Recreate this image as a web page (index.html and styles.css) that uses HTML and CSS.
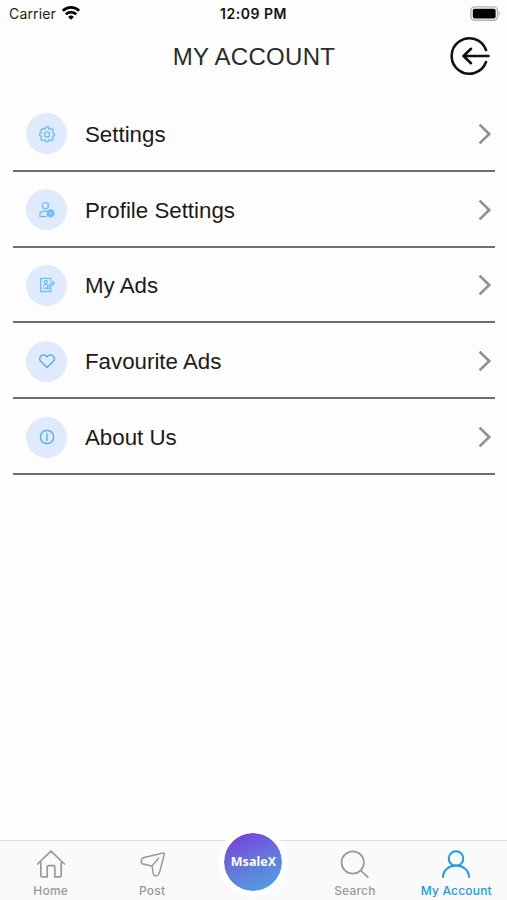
FILE: index.html
```html
<!DOCTYPE html>
<html lang="en">
<head>
<meta charset="utf-8">
<title>My Account</title>
<link rel="stylesheet" href="styles.css">
</head>
<body>
<div class="status">
  <div class="carrier"><span>Carrier</span>
    <svg class="wifi" width="18" height="14" viewBox="0 0 18 14" fill="none" stroke="#000" stroke-width="2.7"><path d="M.9 4.800a11.500 11.500 0 0 1 16.200 0"/><path d="M3.800 8.200a7.400 7.400 0 0 1 10.400 0"/><path d="M9 13.800 6.100 10.900a4.200 4.200 0 0 1 5.800 0z" fill="#000" stroke="none"/></svg>
  </div>
  <div class="time">12:09 PM</div>
  <svg class="battery" width="31" height="16" viewBox="0 0 31 16"><rect x=".9" y=".9" width="26.6" height="13.4" rx="3.8" fill="#fdfdfd" stroke="#b4b4b4" stroke-width="1.4"/><rect x="2.8" y="2.7" width="22.8" height="9.8" rx="1.8"/><path d="M28.600 5.200q2.400 2.400 0 4.800z" fill="#aaa"/></svg>
</div>
<header class="header">
  <h1>MY ACCOUNT</h1>
  <svg class="logout" width="42" height="40" viewBox="0 0 42 40" fill="none" stroke="#111" stroke-width="2.6" stroke-linecap="round" stroke-linejoin="round"><path d="M37 14A17.700 17.700 0 1 0 37 26"/><path d="M39.500 20H14.500M22 12.800 14.500 20l7.500 7.200"/></svg>
</header>
<main class="list">
  <div class="row"><span class="badge"><svg width="18" height="18" viewBox="0 0 18 18"><path d="M7.700 2h2.600l.4 1.900 1.300.5 1.600-1 1.800 1.800-1 1.600.5 1.300 1.500.4v2.100l-1.500.4-.5 1.400 1 1.500-1.800 1.800-1.600-1-1.300.5-.4 1.500H7.700l-.4-1.500-1.300-.5-1.600 1-1.800-1.800 1-1.500-.5-1.400-1.500-.4V8.500l1.500-.4.5-1.300-1-1.600 1.800-1.800 1.600 1 1.300-.5z"/><circle cx="9" cy="9.400" r="2.600"/></svg></span><span class="label">Settings</span><svg class="chevron" width="14" height="22" viewBox="0 0 14 22"><path d="m1.600 1.600 9.600 9.400-9.600 9.400"/></svg></div>
  <div class="row"><span class="badge"><svg width="18" height="18" viewBox="0 0 18 18"><circle cx="7.300" cy="4.800" r="3.100"/><path d="M8.300 15.700H1.900v-2.400q0-3 3-3h3.600"/><path d="m12.500 8.500 3.200 1.900v3.700l-3.200 1.900-3.200-1.900v-3.700z" fill="#6fbcf6"/><circle cx="12.500" cy="12.200" r="1" stroke="#8fcaf9"/></svg></span><span class="label">Profile Settings</span><svg class="chevron" width="14" height="22" viewBox="0 0 14 22"><path d="m1.600 1.600 9.600 9.400-9.600 9.400"/></svg></div>
  <div class="row"><span class="badge"><svg width="18" height="18" viewBox="0 0 18 18"><path d="M12.800 5V2.300H2.700v13.200h10.100v-3"/><circle cx="7.800" cy="5.800" r="1.500"/><path d="M5.500 9.800q2.300-3 4.600 0M5.300 12.200h3M9 13l.6-2.300 5.400-5.300 1.300 1.300-5.200 5.500z"/></svg></span><span class="label">My Ads</span><svg class="chevron" width="14" height="22" viewBox="0 0 14 22"><path d="m1.600 1.600 9.600 9.400-9.600 9.400"/></svg></div>
  <div class="row"><span class="badge strong"><svg width="18" height="18" viewBox="0 0 18 18"><path d="M9 15.500 2.700 9.300C-.6 5.800 4.400.1 9 4.700c4.600-4.600 9.600 1.100 6.300 4.600z"/></svg></span><span class="label">Favourite Ads</span><svg class="chevron" width="14" height="22" viewBox="0 0 14 22"><path d="m1.600 1.600 9.600 9.400-9.600 9.400"/></svg></div>
  <div class="row"><span class="badge strong"><svg width="18" height="18" viewBox="0 0 18 18"><circle cx="9" cy="9" r="6.700"/><path d="M9 7.200v5.200M9 5.400v.5"/></svg></span><span class="label">About Us</span><svg class="chevron" width="14" height="22" viewBox="0 0 14 22"><path d="m1.600 1.600 9.600 9.400-9.600 9.400"/></svg></div>
</main>
<nav class="tabs">
  <div class="tab"><svg width="32" height="32" viewBox="0 0 32 32"><path d="M5.800 13.500v13q0 1.400 1.400 1.400h5v-10q0-1.200 1.200-1.200h5.200q1.200 0 1.200 1.200v10h5q1.400 0 1.400-1.400v-13M2.600 15 16 2.200 29.400 15"/></svg><span>Home</span></div>
  <div class="tab post"><svg width="32" height="32" viewBox="0 0 32 32"><path d="M27.200 4 8 8.500Q5.400 9.300 5.300 12v1.200q.1 1.500 1.500 1.900l9.200 1.800 1.400 8.200q.3 1.600 1.800 1.600h1.200q1.500 0 2.300-1.700 1.300-2.600 1.800-5.200L28.300 5.100q.2-1.300-1.100-1.100zM16 16.900l6.500-7.600"/></svg><span>Post</span></div>
  <div class="tab center"><div class="brand">MsaleX</div></div>
  <div class="tab"><svg width="32" height="32" viewBox="0 0 32 32"><circle cx="13.700" cy="13.500" r="11.200"/><path d="m21.800 21.500 7 6.700"/></svg><span>Search</span></div>
  <div class="tab active"><svg width="32" height="32" viewBox="0 0 32 32"><circle cx="16" cy="9.500" r="7.300"/><path d="M3 28C3.500 12.800 28.500 12.800 29 28"/></svg><span>My Account</span></div>
</nav>
</body>
</html>
```
FILE: styles.css
```css
* { box-sizing: border-box; }
body {
  margin: 0;
  width: 507px;
  height: 900px;
  display: flex;
  flex-direction: column;
  overflow: hidden;
  background: #fdfdfd;
  color: #1b1b1b;
  font-family: "Liberation Sans", Arial, sans-serif;
}
svg { display: block; flex: none; }
.status {
  height: 28px;
  display: grid;
  grid-template-columns: 1fr auto 1fr;
  align-items: center;
  padding: 0 6px 1px 9px;
  font-family: Inter, sans-serif;
  font-size: 14px;
}
.carrier { display: flex; align-items: center; gap: 6px; color: #222; letter-spacing: .15px; }
.wifi { margin-top: -2px; }
.time { font-weight: 600; color: #111; margin-left: -3px; letter-spacing: .5px; }
.battery { justify-self: end; }
.header {
  height: 68px;
  display: grid;
  grid-template-columns: 60px 1fr 60px;
  padding: 8px 0 0;
}
h1 {
  grid-column: 2;
  margin: 7px 0 0 1px;
  text-align: center;
  font-size: 24px;
  line-height: 28px;
  font-weight: 400;
  letter-spacing: .3px;
  color: #292d32;
}
.logout { margin-left: 2px; }
.list { padding: 0 12.500px 0 13px; flex: 1; }
.row {
  height: 75.800px;
  display: flex;
  align-items: center;
  padding: 2px 3px 0 13px;
  border-bottom: 2px solid #6f6f6f;
}
.badge {
  width: 41px;
  height: 41px;
  border-radius: 50%;
  background: #e0eafe;
  display: grid;
  place-items: center;
}
.badge svg { fill: none; stroke: #70bdf5; stroke-width: 1.300; stroke-linejoin: round; stroke-linecap: round; }
.strong svg { stroke: #49acf4; }
.label { margin-left: 18px; flex: 1; font-size: 22.300px; line-height: 28px; padding-top: 2px; }
.chevron { fill: none; stroke: #919191; stroke-width: 2.700; }
.tabs {
  height: 60px;
  display: grid;
  grid-template-columns: repeat(5, 1fr);
  border-top: 1px solid #dedede;
  background: #fafafa;
}
.tab {
  display: flex;
  flex-direction: column;
  align-items: center;
  padding-top: 8px;
  color: #999;
  font: 500 12px/15px Inter, sans-serif;
  letter-spacing: .2px;
  white-space: nowrap;
}
.tab svg { fill: none; stroke: currentColor; stroke-width: 1.700; stroke-linejoin: round; stroke-linecap: round; }
.tab span { margin-top: 2px; }
.post svg { stroke-width: 1.500; }
.active { color: #1b99e5; }
.tab.active svg { stroke-width: 2; }
.center { padding: 0; }
.brand {
  width: 70px;
  height: 70px;
  margin-top: -14px;
  border: 6px solid #fefefe;
  border-radius: 50%;
  background: linear-gradient(155deg, #7b35dc 8%, #6870dc 45%, #4ba9dd 92%) border-box;
  background-clip: padding-box;
  background-color: #fefefe;
  display: grid;
  place-items: center;
  color: #fff;
  font: 700 12.500px/18px "Noto Sans", sans-serif;
  letter-spacing: .1px;
}
```
